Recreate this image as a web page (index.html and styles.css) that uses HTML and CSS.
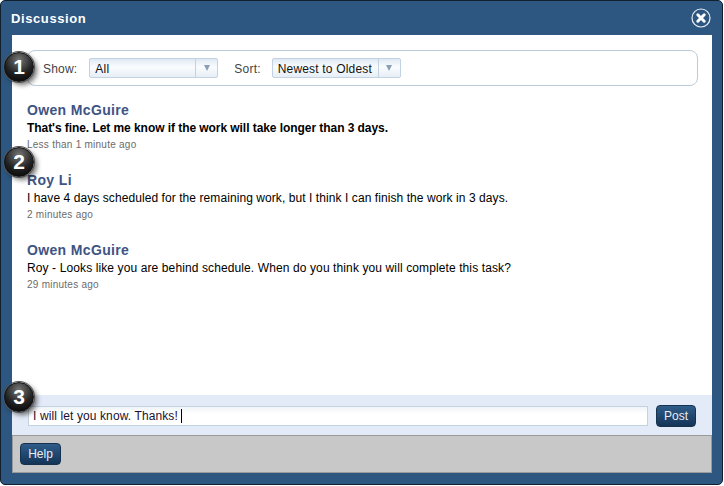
FILE: index.html
```html
<!DOCTYPE html>
<html lang="en">
<head>
<meta charset="utf-8">
<title>Discussion</title>
<link rel="stylesheet" href="styles.css">
</head>
<body>
<div class="window">
  <header class="titlebar">
    <h1 class="title">Discussion</h1>
    <button class="close" aria-label="Close">
      <svg width="20" height="20" viewBox="0 0 20 20">
        <circle cx="10" cy="10" r="9" fill="none" stroke="#e8eef4" stroke-width="1.2"/>
        <path d="M6.8 6.8 13.2 13.2M13.2 6.8 6.8 13.2" stroke="#fff" stroke-width="3" stroke-linecap="round"/>
      </svg>
    </button>
  </header>
  <main class="body">
    <section class="filters">
      <span class="label">Show:</span>
      <div class="select select-show">
        <span class="select-value">All</span>
        <span class="select-arrow"><i></i></span>
      </div>
      <span class="label label-sort">Sort:</span>
      <div class="select select-sort">
        <span class="select-value">Newest to Oldest</span>
        <span class="select-arrow"><i></i></span>
      </div>
    </section>
    <section class="messages">
      <article class="message">
        <h2 class="author">Owen McGuire</h2>
        <p class="text text-new">That's fine. Let me know if the work will take longer than 3 days.</p>
        <p class="time">Less than 1 minute ago</p>
      </article>
      <article class="message">
        <h2 class="author">Roy Li</h2>
        <p class="text text-tight">I have 4 days scheduled for the remaining work, but I think I can finish the work in 3 days.</p>
        <p class="time">2 minutes ago</p>
      </article>
      <article class="message">
        <h2 class="author">Owen McGuire</h2>
        <p class="text">Roy - Looks like you are behind schedule. When do you think you will complete this task?</p>
        <p class="time">29 minutes ago</p>
      </article>
    </section>
    <section class="composer">
      <div class="input"><span>I will let you know. Thanks!</span><span class="caret"></span></div>
      <button class="btn">Post</button>
    </section>
    <footer class="footer">
      <button class="btn btn-help">Help</button>
    </footer>
  </main>
  <span class="badge badge-1">1</span>
  <span class="badge badge-2">2</span>
  <span class="badge badge-3">3</span>
</div>
</body>
</html>
```
FILE: styles.css
```css
* { box-sizing: border-box; }
html, body { margin: 0; padding: 0; background: #fff; }
body { width: 724px; height: 486px; font-family: "Liberation Sans", Arial, sans-serif; overflow: hidden; }
.window {
  position: relative;
  width: 723px;
  height: 485px;
  background: #2d5780;
  border: 1px solid #10202f;
  border-radius: 5px;
  display: flex;
  flex-direction: column;
  padding: 0 10px 11px 11px;
}
.titlebar { height: 34px; flex: none; display: flex; align-items: center; justify-content: space-between; }
.title { margin: 0 0 0 -1px; font-size: 13px; font-weight: bold; color: #fff; letter-spacing: 0.6px; }
.close { width: 20px; height: 20px; padding: 0; border: 0; background: none; margin-right: 1px; margin-top: -1px; display: block; }
.close svg { display: block; }
.body { flex: 1; background: #fff; display: flex; flex-direction: column; min-height: 0; }
.filters {
  flex: none;
  margin: 15px 14px 0 15px;
  height: 36px;
  border: 1px solid #bccbd9;
  border-radius: 8px;
  display: flex;
  align-items: center;
  padding-left: 15px;
  font-size: 12px;
}
.label { color: #444; letter-spacing: 0.2px; padding-top: 1px; }
.label-sort { margin-left: 16px; }
.select {
  height: 20px;
  margin-left: 12px;
  display: flex;
  border: 1px solid #c3d2e0;
  border-radius: 2px;
  background: linear-gradient(#dfe9f3, #fafcfe 45%, #e6eef6);
  color: #111;
}
.select-show { width: 129px; }
.select-sort { width: 129px; margin-left: 11px; }
.select-value { flex: 1; padding-left: 5px; line-height: 20px; font-size: 12px; letter-spacing: 0.18px; white-space: nowrap; }
.select-arrow { width: 22px; border-left: 1px solid #c3d2e0; display: flex; align-items: center; justify-content: center; }
.select-arrow i { width: 0; height: 0; border-left: 3.5px solid transparent; border-right: 3.5px solid transparent; border-top: 6px solid #8a9fb5; }
.messages { flex: 1; padding: 16px 15px 0; min-height: 0; }
.message { height: 70px; }
.author { margin: 0; font-size: 14px; line-height: 17px; font-weight: bold; color: #3e5484; letter-spacing: 0.35px; }
.text { margin: 2px 0 0; font-size: 12px; line-height: 15px; color: #000; letter-spacing: 0.11px; }
.text-tight { letter-spacing: 0.075px; }
.text-new { font-weight: bold; letter-spacing: -0.06px; }
.time { margin: 3px 0 0; font-size: 10px; line-height: 12px; color: #6b6b6b; letter-spacing: 0.25px; }
.composer {
  flex: none;
  height: 40px;
  background: #e4ebf8;
  display: flex;
  align-items: center;
  padding: 2px 16px 0 16px;
}
.input {
  width: 620px;
  height: 20px;
  background: linear-gradient(#f0f4f8, #fff 40%);
  border: 1px solid #c3d2e0;
  padding-left: 4px;
  font-size: 12px;
  line-height: 18px;
  color: #1a1030;
  letter-spacing: 0.11px;
  display: flex;
  align-items: center;
}
.caret { width: 1px; height: 14px; background: #000; margin-left: 3px; }
.btn {
  margin-left: 8px;
  width: 40px;
  height: 22px;
  padding: 0;
  border: 1px solid #16324f;
  border-radius: 4px;
  background: linear-gradient(#2f5c8a, #143456);
  color: #e8eef4;
  font: 12px "Liberation Sans", Arial, sans-serif;
}
.footer {
  flex: none;
  height: 38px;
  background: #c8c8c8;
  border: 1px solid #9a9a9a;
  display: flex;
  align-items: center;
  padding-left: 7px;
}
.btn-help { margin-left: 0; width: 41px; }
.badge {
  position: absolute;
  left: 3px;
  width: 30px;
  height: 30px;
  border-radius: 50%;
  background: radial-gradient(circle at 50% 25%, #777, #222 55%, #000);
  border: 1px solid #111;
  box-shadow: 0 0 0 1px #555, 3px 3px 5px rgba(0,0,0,.55);
  color: #fff;
  font-size: 21px;
  font-weight: bold;
  line-height: 28px;
  text-align: center;
}
.badge-1 { top: 51px; }
.badge-2 { top: 146px; }
.badge-3 { top: 381px; }
```
